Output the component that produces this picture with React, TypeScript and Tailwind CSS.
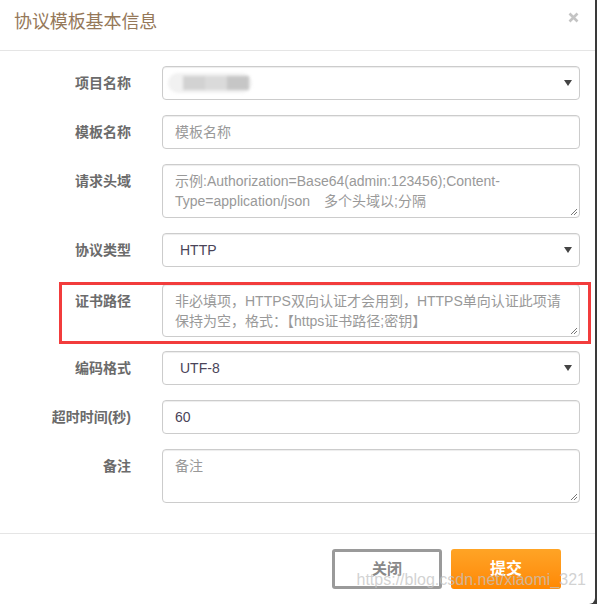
const font = { fontFamily: '"Liberation Sans", "Noto Sans CJK SC", sans-serif' };

function Arrow() {
  return (
    <svg width="8" height="6" viewBox="0 0 8 6" className="shrink-0">
      <path d="M0 0 H8 L4 6 Z" fill="#444" />
    </svg>
  );
}

function Grip() {
  return (
    <svg width="7" height="7" viewBox="0 0 7 7" className="absolute right-[2px] bottom-[2px]">
      <path d="M1 7 L7 1 M4 7 L7 4" stroke="#777" strokeWidth="1" />
    </svg>
  );
}

const box =
  "w-[418px] border border-[#ccc] rounded-[4px] bg-white shadow-[inset_0_1px_1px_rgba(0,0,0,0.075)] text-[14px] leading-[20px]";

function Row({
  label,
  children,
  mb = "mb-[15px]",
}: {
  label: string;
  children: React.ReactNode;
  mb?: string;
}) {
  return (
    <div className={`flex items-start ${mb}`}>
      <div className="w-[131px] shrink-0 text-right pt-[7px] text-[14px] leading-[20px] font-bold text-[#6b6b6b]">
        {label}
      </div>
      <div className="ml-[31px]">{children}</div>
    </div>
  );
}

function Select({ children }: { children: React.ReactNode }) {
  return (
    <div className={`${box} h-[34px] flex items-center justify-between pl-[17px] pr-[7px] text-[#4a4458]`}>
      <div>{children}</div>
      <Arrow />
    </div>
  );
}

function Input({ value, placeholder }: { value?: string; placeholder?: string }) {
  return (
    <div className={`${box} h-[34px] flex items-center px-[12px]`}>
      {value ? (
        <span className="text-[#4a4458]">{value}</span>
      ) : (
        <span className="text-[#999]">{placeholder}</span>
      )}
    </div>
  );
}

function TextArea({ lines, h = "h-[54px]" }: { lines: string[]; h?: string }) {
  return (
    <div className={`${box} ${h} relative px-[12px] pt-[6px] text-[#999] whitespace-pre overflow-hidden`}>
      {lines.map((l, i) => (
        <div key={i}>{l}</div>
      ))}
      <Grip />
    </div>
  );
}

export default function App() {
  return (
    <div className="w-[597px] h-[604px] bg-[#3a3a3a] overflow-hidden" style={font}>
      <div className="relative w-[595px] h-[604px] bg-white rounded-br-[6px] flex flex-col">
        {/* Header */}
        <div className="h-[51px] shrink-0 border-b border-[#e5e5e5] flex items-start justify-between pl-[14px] pr-[16px]">
          <div className="pt-[11px] text-[18px] leading-[22px] text-[#957859] tracking-[-0.1px]">
            协议模板基本信息
          </div>
          <svg width="11" height="11" viewBox="0 0 11 11" className="mt-[12px]">
            <path d="M1.5 1.5 L9.5 9.5 M9.5 1.5 L1.5 9.5" stroke="#c4c4c4" strokeWidth="2.6" />
          </svg>
        </div>

        {/* Body */}
        <div className="pt-[15px] pb-[15px] border-b border-[#e5e5e5]">
          <Row label="项目名称">
            <div className={`${box} h-[34px] flex items-center justify-between pl-[5px] pr-[7px]`}>
              <div className="w-[84px] h-[20px] rounded-full bg-[#f1f1f1] blur-[1.5px] flex items-center pl-[15px]">
                <div className="w-[22px] h-[14px] bg-[#d2d2d2]" />
                <div className="w-[22px] h-[14px] bg-[#dadada]" />
                <div className="w-[22px] h-[14px] bg-[#c6c6c6]" />
              </div>
              <Arrow />
            </div>
          </Row>
          <Row label="模板名称">
            <Input placeholder="模板名称" />
          </Row>
          <Row label="请求头域">
            <TextArea
              lines={[
                "示例:Authorization=Base64(admin:123456);Content-",
                "Type=application/json　多个头域以;分隔",
              ]}
            />
          </Row>
          <Row label="协议类型" mb="mb-[17px]">
            <Select>HTTP</Select>
          </Row>
          <Row label="证书路径" mb="mb-[14px]">
            <TextArea
              h="h-[53px]"
              lines={[
                "非必填项，HTTPS双向认证才会用到，HTTPS单向认证此项请",
                "保持为空，格式：【https证书路径;密钥】",
              ]}
            />
          </Row>
          <Row label="编码格式">
            <Select>UTF-8</Select>
          </Row>
          <Row label="超时时间(秒)">
            <Input value="60" />
          </Row>
          <Row label="备注" mb="mb-[15px]">
            <TextArea lines={["备注"]} />
          </Row>
        </div>

        {/* Footer */}
        <div className="flex justify-end gap-[9px] pt-[15px] pr-[34px]">
          <button className="w-[110px] h-[40px] border-[3px] border-[#9a9a9a] rounded-[3px] bg-white text-[15px] font-bold text-[#888]">
            关闭
          </button>
          <button className="w-[110px] h-[40px] rounded-[3px] bg-gradient-to-b from-[#ffa425] to-[#ff8800] text-[16px] font-bold text-white">
            提交
          </button>
        </div>

        {/* Annotation box */}
        <div className="absolute left-[59px] top-[282px] w-[532px] h-[62px] border-[3px] border-[#f23c3c] pointer-events-none" />

        {/* Watermark */}
        <div className="absolute right-[9px] top-[570px] text-[16px] leading-[20px] text-[rgba(195,195,195,0.75)] pointer-events-none">
          https://blog.csdn.net/xiaomi_321
        </div>
      </div>
    </div>
  );
}
